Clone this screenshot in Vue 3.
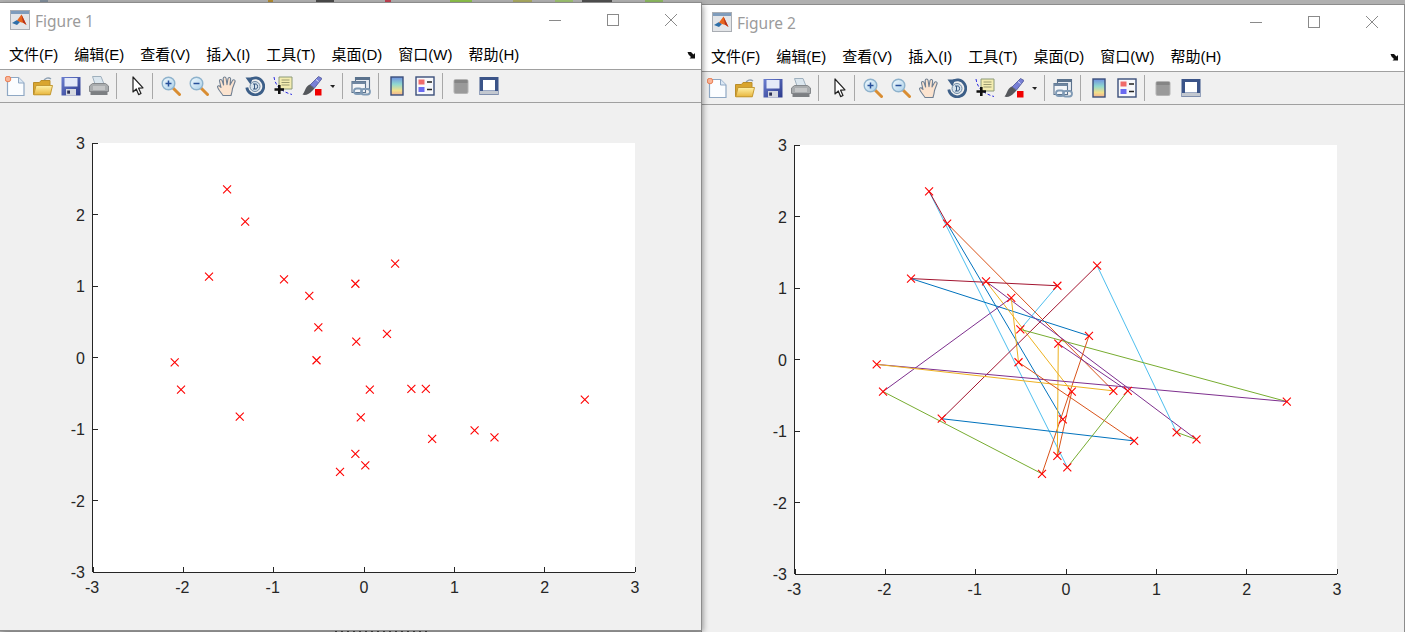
<script setup>
const xTicks = [-3, -2, -1, 0, 1, 2, 3];
const yTicks = [3, 2, 1, 0, -1, -2, -3];

// axes box inside the canvas, in px
const axes = { left: 93, top: 40, width: 542, height: 429 };
const sx = (x) => axes.left + ((x + 3) / 6) * axes.width;
const sy = (y) => axes.top + ((3 - y) / 6) * axes.height;

const pts = {
  A: [-1.52, 2.36], B: [-1.32, 1.91], C: [-1.72, 1.14], D: [-0.89, 1.1], E: [-0.61, 0.87],
  F: [-0.1, 1.04], G: [0.34, 1.32], H: [-0.51, 0.43], I: [0.25, 0.34], J: [-0.09, 0.23],
  K: [-2.1, -0.06], L: [-0.53, -0.03], M: [-2.03, -0.44], N: [0.06, -0.44], O: [0.52, -0.43],
  P: [0.68, -0.43], Q: [-1.38, -0.82], R: [-0.04, -0.83], S: [2.44, -0.58], T: [0.75, -1.13],
  U: [1.22, -1.01], V: [1.44, -1.11], W: [-0.1, -1.34], X: [0.01, -1.5], Y: [-0.27, -1.59],
};
const markers = Object.values(pts).map(([x, y]) => ({ x: sx(x), y: sy(y) }));

const BLUE = "#0072bd";
const ORANGE = "#d95319";
const YELLOW = "#edb120";
const PURPLE = "#7e2f8e";
const GREEN = "#77ac30";
const SKY = "#4dbeee";
const WINE = "#a2142f";

const segments = [
  ["AX", SKY], ["AB", WINE], ["BR", BLUE], ["BO", ORANGE], ["CF", WINE], ["CI", BLUE],
  ["DV", PURPLE], ["DN", YELLOW], ["EM", PURPLE], ["EL", YELLOW], ["FH", SKY], ["GQ", WINE],
  ["GU", SKY], ["HS", GREEN], ["IY", ORANGE], ["JW", YELLOW], ["JP", PURPLE], ["KS", PURPLE],
  ["KO", YELLOW], ["LT", ORANGE], ["MY", GREEN], ["NW", ORANGE], ["QT", BLUE], ["UV", GREEN],
  ["PX", GREEN],
].map(([pair, color]) => {
  const a = pts[pair[0]];
  const b = pts[pair[1]];
  return { key: pair, color, x1: sx(a[0]), y1: sy(a[1]), x2: sx(b[0]), y2: sy(b[1]) };
});

const figures = [
  { id: 1, lines: [] },
  { id: 2, lines: segments },
];

const menus = ["文件(F)", "编辑(E)", "查看(V)", "插入(I)", "工具(T)", "桌面(D)", "窗口(W)", "帮助(H)"];

// bits of whatever is behind the windows, showing in the top strip
const behind = [
  { x: 40, w: 8, c: "#7f8c99" },
  { x: 268, w: 5, c: "#b08a30" },
  { x: 316, w: 18, c: "#4a4a4a" },
  { x: 385, w: 6, c: "#c04050" },
  { x: 450, w: 22, c: "#8cc04a" },
  { x: 513, w: 19, c: "#a8a860" },
  { x: 555, w: 18, c: "#9cc070" },
  { x: 582, w: 30, c: "#505050" },
  { x: 645, w: 18, c: "#8cb860" },
];
</script>

<template>
  <div class="desktop">
    <i
      v-for="b in behind"
      :key="b.x"
      class="behind"
      :style="{ left: b.x + 'px', width: b.w + 'px', background: b.c }"
    ></i>
    <i class="behind-text"></i>

    <!-- shared toolbar icons -->
    <svg class="sprite" width="0" height="0">
      <defs>
        <linearGradient id="g-folder" x1="0" y1="0" x2="0" y2="1">
          <stop offset="0" stop-color="#fff2a8" />
          <stop offset="1" stop-color="#e8b53c" />
        </linearGradient>
        <linearGradient id="g-lens" x1="0" y1="0" x2="1" y2="1">
          <stop offset="0" stop-color="#f4fbff" />
          <stop offset="1" stop-color="#a9cfe8" />
        </linearGradient>
        <linearGradient id="g-bar" x1="0" y1="0" x2="0" y2="1">
          <stop offset="0" stop-color="#6f8fe0" />
          <stop offset="0.4" stop-color="#8fd8d0" />
          <stop offset="0.75" stop-color="#f2e08a" />
          <stop offset="1" stop-color="#f2b090" />
        </linearGradient>
        <linearGradient id="g-disk" x1="0" y1="0" x2="1" y2="1">
          <stop offset="0" stop-color="#6c7fd0" />
          <stop offset="1" stop-color="#2c3a8c" />
        </linearGradient>
      </defs>
      <symbol id="i-new" viewBox="0 0 20 20">
        <path d="M2.5 1.5H13.5L19 7V19.5H2.5Z" fill="#fbfdff" stroke="#8fa8c4" stroke-width="1.2" />
        <path d="M13.5 1.5V7H19" fill="#dce8f4" stroke="#8fa8c4" />
        <circle cx="3" cy="3" r="2.8" fill="#f9b497" stroke="#e8774a" stroke-width="0.9" />
      </symbol>
      <symbol id="i-open" viewBox="0 0 20 20">
        <path d="M10.5 5C12 2 15.5 1 18 3" fill="none" stroke="#8ea0b2" stroke-width="1.4" />
        <path d="M0.5 18.5V6.5H6.5L8 4.5H17V18.5Z" fill="#d9a52e" stroke="#b98d2a" />
        <path d="M0.8 18.8L3 9.5H19.5L17.3 18.8Z" fill="url(#g-folder)" stroke="#c59a35" />
      </symbol>
      <symbol id="i-save" viewBox="0 0 20 20">
        <path d="M0.5 1H19.5V19.5H0.5Z" fill="url(#g-disk)" />
        <rect x="3.5" y="2" width="13" height="8.5" fill="#e4eaf8" />
        <rect x="5" y="13" width="10" height="6.5" fill="#d5d8e0" />
        <rect x="6.2" y="14.5" width="2.8" height="3.2" fill="#2b2f55" />
      </symbol>
      <symbol id="i-print" viewBox="0 0 20 20">
        <path d="M3.5 0.5H12L15 8H6Z" fill="#dbe6ee" stroke="#9fb0bd" />
        <path d="M0.5 10L3.5 7.5H16.5L19.5 10V15.5H0.5Z" fill="#a9acae" stroke="#85888b" />
        <path d="M1.5 15.5H18.5V19H1.5Z" fill="#7c7f82" />
        <path d="M4 11H16M4 13H16" stroke="#dedede" />
      </symbol>
      <symbol id="i-cursor" viewBox="0 0 20 20">
        <path d="M6 1V16L9.3 13L11.6 18.6L14 17.5L11.6 12.2L16 11.8Z" fill="#fff" stroke="#222" stroke-width="1.2" stroke-linejoin="round" />
      </symbol>
      <symbol id="i-zoomin" viewBox="0 0 20 20">
        <path d="M12 12L18.5 18.5" stroke="#d98d32" stroke-width="3" stroke-linecap="round" />
        <circle cx="7.5" cy="7.5" r="6.3" fill="url(#g-lens)" stroke="#8eb2cc" stroke-width="1.4" />
        <path d="M4.5 7.5H10.5M7.5 4.5V10.5" stroke="#28509a" stroke-width="1.5" />
      </symbol>
      <symbol id="i-zoomout" viewBox="0 0 20 20">
        <path d="M12 12L18.5 18.5" stroke="#d98d32" stroke-width="3" stroke-linecap="round" />
        <circle cx="7.5" cy="7.5" r="6.3" fill="url(#g-lens)" stroke="#8eb2cc" stroke-width="1.4" />
        <path d="M4.5 7.5H10.5" stroke="#28509a" stroke-width="1.5" />
      </symbol>
      <symbol id="i-hand" viewBox="0 0 20 20">
        <path d="M6 19.5C4 16.5 0.3 12.5 0.5 10.5C1.5 9 3 10 4 11.5L2.5 5C2.4 3.2 4.6 3 5.2 4.8L6.6 9L6.2 2.6C6.4 0.5 8.8 0.6 9.1 2.5L10 8.6L11 2.6C11.5 0.8 13.8 1.2 13.6 3.2L13 9L15.5 4.5C16.4 3 18.6 3.9 18 5.8L15.5 12.5C15.2 15 14.8 17 14 19.5Z" fill="#fbe3cf" stroke="#6f7f92" stroke-width="1.1" stroke-linejoin="round" />
      </symbol>
      <symbol id="i-rotate" viewBox="0 0 20 20">
        <path d="M4.5 4A8.5 8.5 0 1 1 1.8 11.5" fill="none" stroke="#3d5f88" stroke-width="2.8" />
        <path d="M0.5 1.5L8 1.5L5.5 8.5Z" fill="#3d5f88" />
        <circle cx="10" cy="10.5" r="5" fill="#d5e2ec" stroke="#6f8aa5" />
        <path d="M8 8H11.2C13 8 13 13 11.2 13H8M9.5 8V13" fill="none" stroke="#35567f" />
      </symbol>
      <symbol id="i-tip" viewBox="0 0 20 20">
        <path d="M6 1H19V13H6Z" fill="#f3ecb0" stroke="#8c9a78" />
        <path d="M8.5 4H16.5M8.5 6.5H16.5M8.5 9H16.5" stroke="#9a9a70" />
        <path d="M1 1C2 8 6 15 19 18.5" fill="none" stroke="#2a2ae0" stroke-dasharray="3 2" />
        <path d="M1.5 13.5H11M6.3 9V18" stroke="#111" stroke-width="2.6" />
      </symbol>
      <symbol id="i-brush" viewBox="0 0 20 20">
        <path d="M8 9L16.5 0.5L20 2.5L12.5 12Z" fill="#7880d6" stroke="#4a5396" stroke-width="0.8" />
        <path d="M14 3.5L16.5 5.5" stroke="#dfe3ff" />
        <path d="M7.5 8.5L12.5 12.5L10 15C8 18 3 19.8 0.5 18.5C3 16.5 2.5 11.5 7.5 8.5Z" fill="#55585c" />
        <rect x="13" y="13" width="6.5" height="6.5" fill="#f00000" />
      </symbol>
      <symbol id="i-link" viewBox="0 0 20 20">
        <path d="M4.5 1.5H18.5V13H4.5Z" fill="#e6ebf2" stroke="#5b728d" stroke-width="1.1" />
        <path d="M4.5 1.5H18.5V4H4.5Z" fill="#5b728d" />
        <path d="M1 5.5H14.5V16.5H1Z" fill="#f3f5f8" stroke="#5b728d" stroke-width="1.1" />
        <path d="M1 5.5H14.5V8H1Z" fill="#6f86a1" />
        <rect x="3" y="12.5" width="8" height="5.5" rx="2.7" fill="none" stroke="#7f9ab5" stroke-width="1.8" />
        <rect x="10" y="13" width="9" height="5.5" rx="2.7" fill="none" stroke="#7f9ab5" stroke-width="1.8" />
      </symbol>
      <symbol id="i-bar" viewBox="0 0 20 20">
        <rect x="4" y="1" width="12" height="18" fill="url(#g-bar)" stroke="#3b4f7a" stroke-width="1.4" />
      </symbol>
      <symbol id="i-legend" viewBox="0 0 20 20">
        <rect x="1" y="1" width="18" height="18" fill="#f7f8fb" stroke="#3b4f7a" stroke-width="1.4" />
        <rect x="3.5" y="3.5" width="6" height="5" fill="#ef6a6a" />
        <rect x="3.5" y="11" width="6" height="5" fill="#6a6af0" />
        <path d="M12 6H17M12 13.5H17" stroke="#222" stroke-width="1.5" />
      </symbol>
      <symbol id="i-gray" viewBox="0 0 20 20">
        <rect x="3" y="3.5" width="14" height="14" rx="1.5" fill="#9a9a9a" stroke="#b4b4b4" />
        <rect x="3.5" y="4" width="13" height="3" fill="#858585" />
      </symbol>
      <symbol id="i-tools" viewBox="0 0 20 20">
        <rect x="0.5" y="1" width="19" height="18" fill="#3b5488" />
        <rect x="4" y="4" width="12" height="10.5" fill="#fff" />
        <rect x="1" y="15" width="18" height="3.5" fill="#c3c8d0" />
      </symbol>
    </svg>

    <div
      v-for="fig in figures"
      :key="fig.id"
      class="figure-win"
      :class="fig.id === 1 ? 'win-front' : 'win-back'"
    >
      <div class="titlebar">
        <svg class="app-icon" width="20" height="20" viewBox="0 0 20 20">
          <rect x="0.5" y="0.5" width="19" height="19" fill="#e3e5e8" stroke="#a9adb3" />
          <rect x="1" y="1" width="18" height="3" fill="#7f9cbc" />
          <path d="M2 13L7 10L10 12L7 15Z" fill="#2f6fa8" />
          <path d="M7 10.5L11.5 4.5L16.5 15L13.5 13L10 12Z" fill="#e8641b" />
          <path d="M11.5 4.5L13 12.5L16.5 15Z" fill="#b5301a" />
        </svg>
        <span class="title">Figure {{ fig.id }}</span>
        <div class="win-btns">
          <div class="win-btn">
            <svg width="14" height="14" viewBox="0 0 14 14"><path d="M1 7.5H13" stroke="#8a8a8a" /></svg>
          </div>
          <div class="win-btn">
            <svg width="14" height="14" viewBox="0 0 14 14"><rect x="1.5" y="1.5" width="11" height="11" fill="none" stroke="#8a8a8a" /></svg>
          </div>
          <div class="win-btn">
            <svg width="14" height="14" viewBox="0 0 14 14"><path d="M1 1L13 13M13 1L1 13" stroke="#8a8a8a" /></svg>
          </div>
        </div>
      </div>

      <div class="menubar">
        <span v-for="m in menus" :key="m" class="menu-item">{{ m }}</span>
        <svg class="dock" width="10" height="8" viewBox="0 0 10 8">
          <path d="M0.5 1H4L6.5 3.5L8 2V7.5H2.5L4 6L1.5 3.5Z" fill="#111" />
        </svg>
      </div>

      <div class="toolbar">
        <div class="tool"><svg class="ico"><use href="#i-new" /></svg></div>
        <div class="tool"><svg class="ico"><use href="#i-open" /></svg></div>
        <div class="tool"><svg class="ico"><use href="#i-save" /></svg></div>
        <div class="tool"><svg class="ico"><use href="#i-print" /></svg></div>
        <div class="sep"></div>
        <div class="tool tool-cursor"><svg class="ico"><use href="#i-cursor" /></svg></div>
        <div class="sep"></div>
        <div class="tool"><svg class="ico"><use href="#i-zoomin" /></svg></div>
        <div class="tool"><svg class="ico"><use href="#i-zoomout" /></svg></div>
        <div class="tool"><svg class="ico"><use href="#i-hand" /></svg></div>
        <div class="tool"><svg class="ico"><use href="#i-rotate" /></svg></div>
        <div class="tool"><svg class="ico"><use href="#i-tip" /></svg></div>
        <div class="tool tool-brush"><svg class="ico"><use href="#i-brush" /></svg></div>
        <div class="caret"></div>
        <div class="sep"></div>
        <div class="tool"><svg class="ico"><use href="#i-link" /></svg></div>
        <div class="sep"></div>
        <div class="tool"><svg class="ico"><use href="#i-bar" /></svg></div>
        <div class="tool"><svg class="ico"><use href="#i-legend" /></svg></div>
        <div class="sep"></div>
        <div class="tool"><svg class="ico"><use href="#i-gray" /></svg></div>
        <div class="tool"><svg class="ico"><use href="#i-tools" /></svg></div>
      </div>

      <svg class="canvas" width="701" height="527">
        <rect :x="axes.left" :y="axes.top" :width="axes.width" :height="axes.height" fill="#fff" />

        <g transform="translate(0.4 0.6)">
          <line
            v-for="s in fig.lines"
            :key="s.key"
            :x1="s.x1"
            :y1="s.y1"
            :x2="s.x2"
            :y2="s.y2"
            :stroke="s.color"
            stroke-width="1"
          />

          <path
            v-for="(p, i) in markers"
            :key="i"
            :d="`M${p.x - 4} ${p.y - 4}L${p.x + 4} ${p.y + 4}M${p.x + 4} ${p.y - 4}L${p.x - 4} ${p.y + 4}`"
            stroke="#ff0000"
            stroke-width="1.1"
          />
        </g>

        <g shape-rendering="crispEdges" stroke="#262626">
          <line :x1="axes.left - 0.5" :y1="axes.top" :x2="axes.left - 0.5" :y2="axes.top + axes.height" />
          <line
            :x1="axes.left"
            :y1="axes.top + axes.height"
            :x2="axes.left + axes.width"
            :y2="axes.top + axes.height"
          />
          <line
            v-for="t in xTicks"
            :key="'xt' + t"
            :x1="sx(t)"
            :y1="axes.top + axes.height"
            :x2="sx(t)"
            :y2="axes.top + axes.height - 5"
          />
          <line
            v-for="t in yTicks"
            :key="'yt' + t"
            :x1="axes.left"
            :y1="sy(t)"
            :x2="axes.left + 5"
            :y2="sy(t)"
          />
        </g>

        <text
          v-for="t in xTicks"
          :key="'xl' + t"
          class="tick"
          text-anchor="middle"
          :x="sx(t) - (t < 0 ? 1 : 0)"
          :y="axes.top + axes.height + 21"
        >{{ t }}</text>
        <text
          v-for="t in yTicks"
          :key="'yl' + t"
          class="tick"
          text-anchor="end"
          :x="axes.left - 8"
          :y="sy(t) + 6"
        >{{ t }}</text>
      </svg>
    </div>
  </div>
</template>

<style scoped>
.desktop {
  position: relative;
  width: 1405px;
  height: 632px;
  overflow: hidden;
  background: #b0b0b0;
}

.behind {
  position: absolute;
  top: 0;
  height: 3px;
}

.behind-text {
  position: absolute;
  left: 335px;
  top: 630px;
  width: 95px;
  height: 2px;
  background: repeating-linear-gradient(90deg, #444 0 2px, transparent 2px 6px);
}

.sprite {
  position: absolute;
}

.figure-win {
  position: absolute;
  display: flex;
  flex-direction: column;
  height: 627px;
  background: #f0f0f0;
}

.win-front {
  left: 0;
  top: 3px;
  width: 701px;
  z-index: 2;
  box-shadow: 0 0 0 1px #8c8c8c, 2px 2px 6px rgba(0, 0, 0, 0.4);
}

.win-back {
  left: 702px;
  top: 5px;
  width: 702px;
  z-index: 1;
  box-shadow: 0 0 0 1px #8c8c8c;
}

.titlebar {
  display: flex;
  align-items: center;
  height: 34px;
  padding-left: 10px;
  background: #fff;
}

.app-icon {
  margin-right: 5px;
}

.title {
  padding-top: 2px;
  font-family: "Noto Sans", "Liberation Sans", sans-serif;
  font-size: 15.5px;
  color: #9b9b9b;
}

.win-btns {
  display: flex;
  margin-left: auto;
  margin-right: 1px;
}

.win-back .win-btns {
  margin-right: 3px;
}

.win-btn {
  display: flex;
  align-items: center;
  justify-content: center;
  width: 58px;
  height: 34px;
}

.menubar {
  display: flex;
  align-items: center;
  gap: 16px;
  height: 33px;
  padding-left: 9px;
  padding-top: 1px;
  background: #fff;
  border-bottom: 1px solid #a0a0a0;
  box-sizing: border-box;
  font-family: "Liberation Sans", "Noto Sans CJK SC", sans-serif;
  font-size: 15px;
  color: #000;
}

.dock {
  margin-left: auto;
  margin-right: 4px;
  margin-top: 2px;
}

.toolbar {
  display: flex;
  align-items: center;
  height: 32px;
  padding-left: 1px;
  background: #f0f0f0;
  border-bottom: 1px solid #a0a0a0;
}

.tool {
  display: flex;
  align-items: center;
  justify-content: center;
  width: 28px;
  height: 20px;
}

.tool-cursor {
  padding-left: 3px;
  box-sizing: border-box;
}

.tool-brush {
  margin-left: 1px;
}

.ico {
  width: 20px;
  height: 20px;
}

.sep {
  width: 1px;
  height: 26px;
  margin: 0 4px 0 3px;
  background: #a8a8a8;
}

.caret {
  width: 0;
  height: 0;
  margin: 0 4px 0 4px;
  border-left: 3px solid transparent;
  border-right: 2px solid transparent;
  border-top: 3px solid #222;
}

.canvas {
  display: block;
  flex: none;
}

.tick {
  font-family: "Liberation Sans", Arial, sans-serif;
  font-size: 16px;
  fill: #262626;
}
</style>
